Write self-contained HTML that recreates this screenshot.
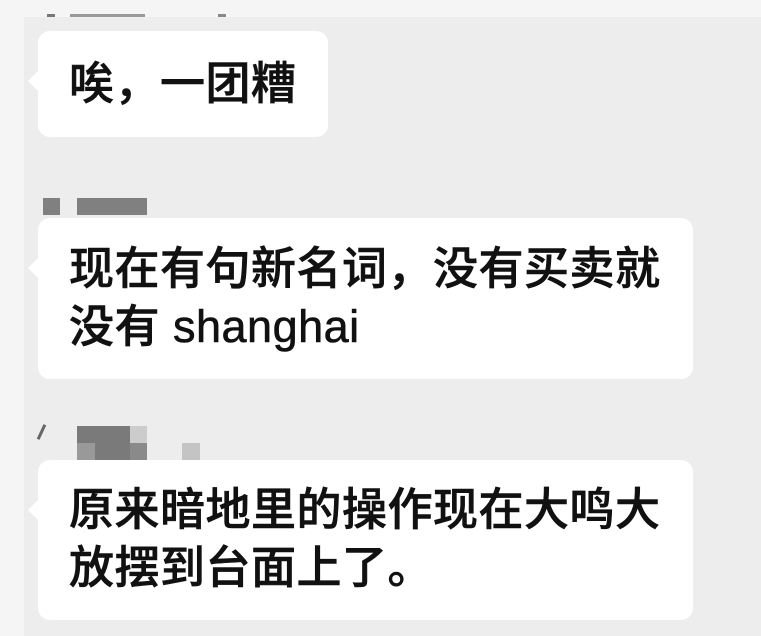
<!DOCTYPE html>
<html><head><meta charset="utf-8"><style>
body{margin:0;width:761px;height:636px;background:#ededed;position:relative;overflow:hidden;font-family:"Liberation Sans","Noto Sans CJK SC",sans-serif;}
.b{position:absolute;background:#fff;border-radius:12px;color:#111;font-size:45px;letter-spacing:0.5px;font-weight:500;line-height:58px;padding:0 0 0 31px;box-sizing:border-box;-webkit-text-stroke:0.6px #111;}
.b:before{content:"";position:absolute;left:-10px;top:40px;border:10px solid transparent;border-left:0;border-right-color:#fff;}
.r{position:absolute;}
</style></head><body>
<div class="r" style="left:0;top:0;width:761px;height:17px;background:#f5f5f5"></div>
<div class="r" style="left:0;top:0;width:24px;height:636px;background:#f5f5f5"></div>
<div class="r" style="left:47px;top:14px;width:8px;height:3px;background:#777"></div>
<div class="r" style="left:70px;top:14px;width:75px;height:3px;background:#999"></div>
<div class="r" style="left:218px;top:14px;width:8px;height:3px;background:#888"></div>
<div class="b" style="left:38px;top:31px;width:290px;height:106px;padding-top:24px">唉，一团糟</div>
<div class="r" style="left:43px;top:198px;width:17px;height:17px;background:#808080"></div>
<div class="r" style="left:77px;top:198px;width:70px;height:17px;background:#808080"></div>
<div class="b" style="left:38px;top:218px;width:655px;height:161px;padding-top:22px">现在有句新名词，没有买卖就<br>没有 shanghai</div>
<div class="r" style="left:40px;top:424px;width:3px;height:16px;background:#666;transform:rotate(25deg)"></div>
<div class="r" style="left:77px;top:426px;width:53px;height:34px;background:#7a7a7a"></div>
<div class="r" style="left:77px;top:443px;width:18px;height:17px;background:#999"></div>
<div class="r" style="left:130px;top:426px;width:17px;height:17px;background:#ccc"></div>
<div class="r" style="left:130px;top:443px;width:17px;height:17px;background:#8a8a8a"></div>
<div class="r" style="left:182px;top:443px;width:18px;height:17px;background:#c4c4c4"></div>
<div class="b" style="left:38px;top:460px;width:655px;height:160px;padding-top:21px">原来暗地里的操作现在大鸣大<br>放摆到台面上了。</div>
</body></html>
